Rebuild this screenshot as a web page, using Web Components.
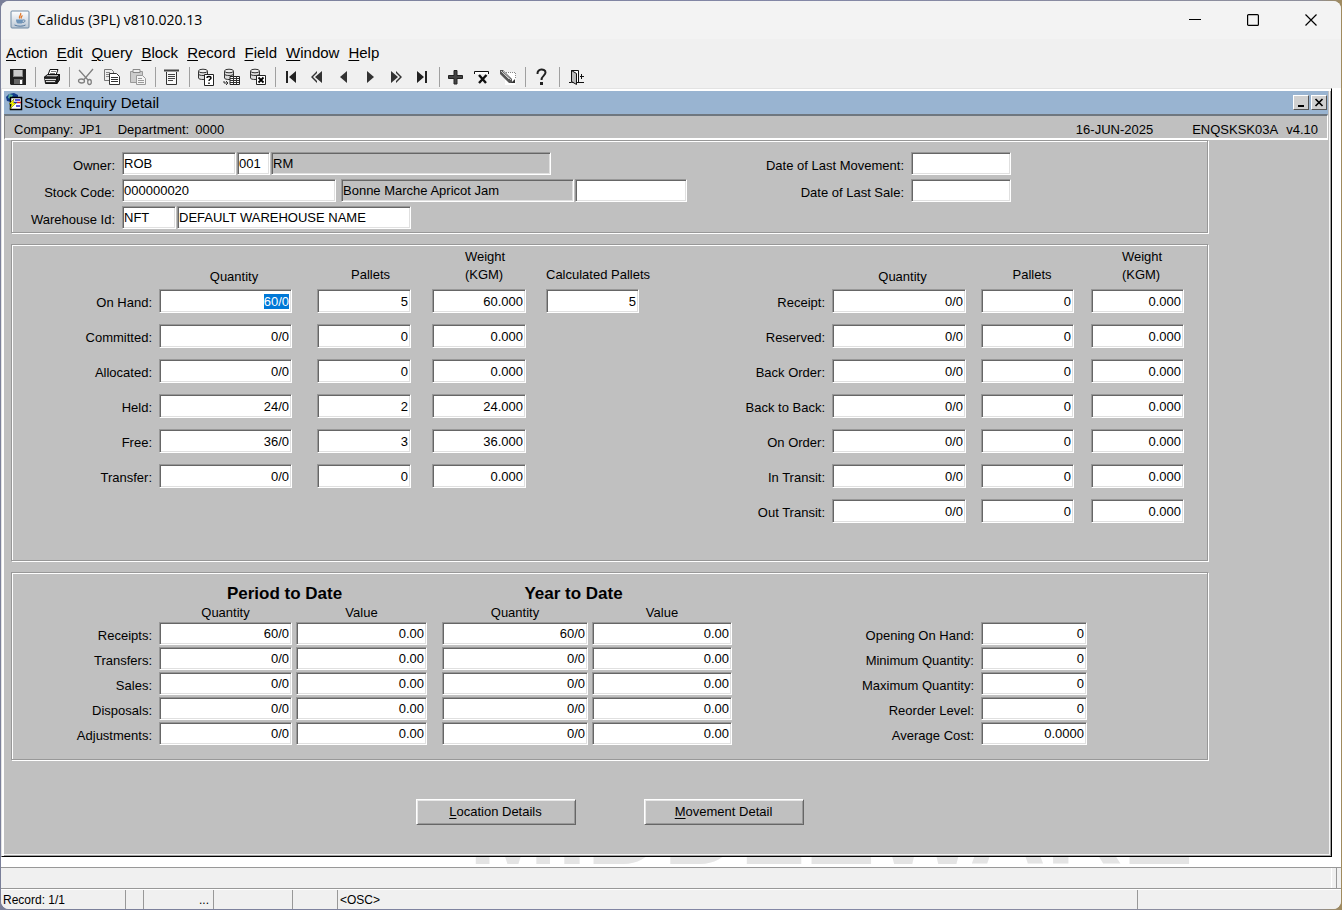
<!DOCTYPE html>
<html lang="en">
<head>
<meta charset="utf-8">
<title>Calidus (3PL) v810.020.13</title>
<style>
  html { height: 100%; }
  body {
    margin: 0;
    min-height: 100%;
    display: flex;
    font: 13px/18px "Liberation Sans", Arial, sans-serif;
    color: #000;
    background: linear-gradient(to right, #7a7f99 0, #8387a6 60%, #8e8f9c 98%, #a08a5c 100%);
  }
</style>
</head>
<body>
<desktop-frame heading="Calidus (3PL) v810.020.13">
  <menu-bar items="Action,Edit,Query,Block,Record,Field,Window,Help"></menu-bar>
  <tool-bar></tool-bar>
  <mdi-area watermark="MIDDLEWARE">
    <child-window heading="Stock Enquiry Detail">
      <context-bar company="JP1" department="0000" date="16-JUN-2025" module="ENQSKSK03A" release="v4.10"></context-bar>
      <etched-panel><stock-key></stock-key></etched-panel>
      <etched-panel><balance-panel></balance-panel></etched-panel>
      <etched-panel><period-panel></period-panel></etched-panel>
      <action-row>
        <action-button>Location Details</action-button>
        <action-button>Movement Detail</action-button>
      </action-row>
    </child-window>
  </mdi-area>
  <status-bar record="Record: 1/1" mode="&lt;OSC&gt;"></status-bar>
</desktop-frame>

<script>
const escapeHtml = s => String(s).replace(/[&<>"]/g, c => ({ '&': '&amp;', '<': '&lt;', '>': '&gt;', '"': '&quot;' }[c]));

class Part extends HTMLElement {
  connectedCallback() {
    if (this.shadowRoot) return;
    const t = document.createElement('template');
    t.innerHTML = `<style>:host,*{box-sizing:border-box}${this.css()}</style>${this.html()}`;
    this.attachShadow({ mode: 'open' }).append(t.content.cloneNode(true));
    this.ready();
  }
  attr(n) { return escapeHtml(this.getAttribute(n) || ''); }
  css() { return ''; }
  html() { return '<slot></slot>'; }
  ready() {}
}

const FIELD_CSS = `
  input {
    display: block; height: 24px; margin: 0; padding: 0 2px 0 1px;
    font: inherit; color: #000; background: #fff; border-radius: 0; outline: 0;
    border: 1px solid; border-color: #989898 #fff #fff #989898;
    box-shadow: inset 1px 1px #666, inset -1px -1px #e0e0e0;
  }
  input.num { text-align: right; }
  input[readonly] { background: #c0c0c0; }
  input::selection { background: #0078d7; color: #fff; }
  label { display: block; white-space: nowrap; }
`;

customElements.define('desktop-frame', class extends Part {
  css() { return `
    :host { display: flex; flex-direction: column; flex: 1; min-width: 0; margin: 1px; border-radius: 8px; overflow: hidden; background: #f0f0f0; }
    header { display: flex; align-items: center; height: 38px; padding-left: 9px; background: #f3f3f3; }
    h1 { flex: 1; margin: 0 0 0 7px; font: 14px/20px "Open Sans", "Noto Sans", sans-serif; }
    button { width: 58px; height: 36px; padding: 0; border: 0; background: none; }
    svg { display: block; margin: auto; }
    .badge { margin: 0; }
    nav { display: flex; margin-right: 1px; }
  `; }
  html() { return `
    <header>
      <svg class="badge" width="20" height="20" viewBox="0 0 20 20" aria-hidden="true">
        <defs><linearGradient id="g" x2="0" y2="1"><stop stop-color="#fff"/><stop offset="1" stop-color="#b9c6d4"/></linearGradient></defs>
        <rect x="1" y="1" width="18" height="17" rx="1" fill="url(#g)" stroke="#6f89a3"/>
        <path d="M10.500 3c1.600 1.800-2.400 2.800-.8 5.500M12.500 5.500c-1.500 1-2 1.500-1 3" fill="none" stroke="#e07a2e" stroke-width="1.300"/>
        <path d="M6 9.500h7c0 3-1 4-1.500 4H8c-1.200 0-2-2-2-4z" fill="#6d93b8"/>
        <path d="M13 10c3-.6 2.500 2.500-.5 2.500M4.500 15c3 1.600 8.500 1.600 11 0" fill="none" stroke="#54799f"/>
      </svg>
      <h1>${this.attr('heading')}</h1>
      <nav aria-label="Window controls">
        <button aria-label="Minimize"><svg width="12" height="12"><path d="M0 5.500h12" stroke="#000"/></svg></button>
        <button aria-label="Maximize"><svg width="12" height="12"><rect x=".6" y=".6" width="10.800" height="10.800" rx="1" fill="none" stroke="#000" stroke-width="1.200"/></svg></button>
        <button aria-label="Close"><svg width="12" height="12"><path d="M.5.5l11 11M11.500.5l-11 11" stroke="#000" stroke-width="1.200"/></svg></button>
      </nav>
    </header>
    <slot></slot>`; }
});

customElements.define('menu-bar', class extends Part {
  css() { return `
    :host { display: flex; gap: 9px; height: 27px; align-items: center; padding-left: 5px; background: #f0f0f0; }
    button { padding: 0; border: 0; background: none; font: 15px/20px "Liberation Sans", Arial, sans-serif; color: #000; }
    u { text-underline-offset: 2px; text-decoration-thickness: 1px; }
  `; }
  html() { return this.attr('items').split(',').map(i => `<button><u>${i[0]}</u>${i.slice(1)}</button>`).join(''); }
});

const cylinder = '<path d="M1.500 3v7c0 2 9 2 9 0V3" fill="#ddd" stroke="#333"/><ellipse cx="6" cy="3" rx="4.500" ry="1.800" fill="#eee" stroke="#333"/><path d="M1.500 6c0 2 9 2 9 0" fill="none" stroke="#333"/>';
const TOOLS = [
  ['Save', '<path d="M1 1h16v16H2l-1-1z" fill="#222"/><path d="M4 2h10v7H4z" fill="#888"/><path d="M5 2h8v6H5z" fill="#ccc"/><path d="M5 11h9v5H5z" fill="#666"/><path d="M11 12h2v4h-2z" fill="#fff"/>'],
  null,
  ['Print', '<path d="M5 7l2-5.500h8L13 7z" fill="#fff" stroke="#111"/><path d="M8 3.500h5M7 5.500h5" stroke="#777"/><path d="M1.500 9l3-2.500h12L14 9.500z" fill="#bbb" stroke="#111"/><path d="M1.500 9H14v6.500H2.500zM14 9l2.500-2.500V12L14 15.500z" fill="#333" stroke="#111"/><path d="M2 11.500h11M3 13.500h9" stroke="#ddd"/>'],
  null,
  ['Cut', '<g fill="none" stroke="#808080" stroke-width="1.300"><path d="M2 2l9 10M16 1L7 11.500"/><ellipse cx="4.500" cy="13" rx="3" ry="2"/><ellipse cx="12.500" cy="14" rx="1.800" ry="2.500"/></g>'],
  ['Copy', '<path d="M1.500 1.500h7l2 2v9h-9z" fill="#eee" stroke="#777"/><path d="M3 4.500h4M3 6.500h4M3 8.500h4" stroke="#888"/><path d="M6.500 5.500h7l3 3v8h-10z" fill="#fff" stroke="#333"/><path d="M8 9.500h7M8 11.500h7M8 13.500h7" stroke="#333"/>'],
  ['Paste', '<path d="M1.500 3.500h12v11h-12z" fill="#ccc" stroke="#999"/><path d="M4 1.500h7v3H4z" fill="#eee" stroke="#888"/><path d="M7.500 7.500h6l3 3v6h-9z" fill="#f4f4f4" stroke="#999"/><path d="M9 10.500h4M9 12.500h6M9 14.500h6" stroke="#999"/>'],
  null,
  ['List', '<path d="M1 2.500h15" stroke="#444" stroke-width="2"/><path d="M3.500 4v12.500h10V4" fill="#f8f8f8" stroke="#333"/><path d="M5 6.500h7M5 8.500h7M5 10.500h7M5 12.500h5" stroke="#444"/>'],
  null,
  ['Enter query', cylinder + '<path d="M7.500 6.500h9v11h-9z" fill="#fff" stroke="#222"/><path d="M10 10c0-2 4-2 4 0 0 1.300-2 1.300-2 3M12 14.500V16" fill="none" stroke="#000" stroke-width="1.400"/>'],
  ['Execute query', cylinder + '<path d="M7 8.500h9.500v8H7z" fill="#fff" stroke="#222"/><path d="M7 10.500h9M7 12.500h9M7 14.500h9M10.500 8v8M13.500 8v8M1 13v2h4M3 13l2 2-2 2" fill="none" stroke="#333"/>'],
  ['Cancel query', cylinder + '<path d="M7.500 7.500h9v9h-9z" fill="#fff" stroke="#222"/><path d="M9.500 9.500l5 5M14.500 9.500l-5 5" stroke="#000" stroke-width="1.800"/>'],
  null,
  ['First record', '<path d="M3 3h2v12H3zM13 3v12L6 9z" fill="#222"/>'],
  ['Previous set', '<path d="M8 3v2L4 9l4 4v2L2 9zM13 3v12L6 9z" fill="#333"/>'],
  ['Previous record', '<path d="M12 3v12L5 9z" fill="#333"/>'],
  ['Next record', '<path d="M6 3v12l7-6z" fill="#333"/>'],
  ['Next set', '<path d="M4 3v12l7-6zM9 3v2l4 4-4 4v2l6-6z" fill="#333"/>'],
  ['Last record', '<path d="M12 3h2v12h-2zM4 3v12l7-6z" fill="#222"/>'],
  null,
  ['Insert record', '<path d="M7 2.500h3v5h5.500v3H10v5.500H7v-5.500H1.500v-3H7z" fill="#444" stroke="#222"/>'],
  ['Remove record', '<path d="M1.500 6V3.500h14V6" fill="#fff" stroke="#111"/><path d="M6 7l7 8M13.500 7L6 15" stroke="#111" stroke-width="2.400"/>'],
  ['Clear record', '<path d="M6 4.500h10.500V17H6z" fill="#fff"/><path d="M7 4.500h9M16.500 5v6" stroke="#888" stroke-dasharray="1 1"/><path d="M1 2h3l9 9v4h-3L1 6z" fill="#555"/><path d="M2 3l8 8M4 3l8 9" stroke="#ccc"/><path d="M12 15l4-4v4z" fill="#333"/>'],
  null,
  ['Help', '<path d="M4.500 6C4 0 12.500.5 12.500 4.500 12.500 7.500 8.500 8 8.500 12" fill="none" stroke="#222" stroke-width="2"/><path d="M7 14h3v3H7z" fill="#222"/>'],
  null,
  ['Exit', '<path d="M4.500 2.500h7v12h-7z" fill="#fff" stroke="#111"/><path d="M4.500 2.500l5 3v11l-5-3z" fill="#bbb" stroke="#111"/><path d="M2 14.500h2M11 14.500h6M13 8.500h4M14.500 6v5" stroke="#111"/>']
];

customElements.define('tool-bar', class extends Part {
  css() { return `
    :host { display: flex; align-items: center; height: 22px; padding-left: 4px; background: #f0f0f0; }
    button { width: 26px; height: 20px; padding: 0; border: 0; background: none; }
    svg { display: block; margin: auto; }
    i { width: 8px; height: 20px; background: linear-gradient(#a0a0a0, #a0a0a0) 4px 0 / 1px 100% no-repeat; }
  `; }
  html() { return TOOLS.map(t => t
    ? `<button aria-label="${t[0]}"><svg width="18" height="18" viewBox="0 0 18 18">${t[1]}</svg></button>`
    : '<i></i>').join(''); }
});

customElements.define('mdi-area', class extends Part {
  css() { return `
    :host { display: flex; flex-direction: column; flex: 1; background: #fff; }
    .pane { flex: 1; display: flex; padding-right: 9px; }
    ::slotted(*) { flex: 1; }
    .mark { display: flex; justify-content: center; align-items: flex-end; height: 10px; padding-left: 320px; overflow: hidden;
      font: bold 106px/80px "Liberation Sans", Arial, sans-serif; color: #e4e4e4; }
    .mark::before { content: attr(data-text); }
  `; }
  html() { return `<div class="pane"><slot></slot></div><div class="mark" data-text="${this.attr('watermark')}"></div>`; }
});

customElements.define('child-window', class extends Part {
  css() { return `
    :host { display: flex; flex-direction: column; min-width: 0; padding: 2px 3px 3px 2px; background: #c0c0c0;
      border: 1px solid; border-color: #e3e3e3 #000 #000 #e3e3e3;
      box-shadow: inset 2px 2px #fff, inset -1px -1px #a0a0a0, inset -2px -2px #f4f4f4; }
    header { display: flex; align-items: center; height: 23px; padding: 0 1px 0 2px; background: #99b4d1; }
    h2 { flex: 1; margin: 0; font: 15px/20px "Liberation Sans", Arial, sans-serif; }
    button { width: 16px; height: 15px; margin-left: 2px; padding: 0; background: #d0d0d0; border: 1px solid; border-color: #fff #555 #555 #fff; }
    svg { display: block; margin: auto; }
    header > svg { margin: 0; }
  `; }
  html() { return `
    <header>
      <svg width="18" height="19" viewBox="0 0 18 19" aria-hidden="true">
        <path d="M0 4l3-3 5-1 4 2v3L5 9 1 8z" fill="#123a8a"/><path d="M3 1l4 1-2 4-3-1z" fill="#59b0a0"/>
        <path d="M4.500 4.500h11v12h-11z" fill="#fff" stroke="#000" stroke-width="1.500"/><path d="M9 7h5M8 9.500h3" stroke="#22c" stroke-width="1.500"/><path d="M11 9.500h4" stroke="#d22" stroke-width="1.500"/><path d="M10 13h4" stroke="#22c" stroke-width="1.500"/>
        <path d="M8 6L3 11h3l-2 5 6-6H7z" fill="#ff0" stroke="#550" stroke-width=".5"/>
      </svg>
      <h2>${this.attr('heading')}</h2>
      <button aria-label="Minimize form"><svg width="12" height="11"><path d="M3 9h6" stroke="#000" stroke-width="2"/></svg></button>
      <button aria-label="Close form"><svg width="12" height="11"><path d="M2.500 2l7 7M9.500 2l-7 7" stroke="#000" stroke-width="1.700"/></svg></button>
    </header>
    <slot></slot>`; }
});

customElements.define('context-bar', class extends Part {
  css() { return `
    :host { display: flex; height: 26px; padding: 5px 9px 0; border: 1px solid; border-width: 2px 1px 2px 1px; border-color: #6f777f #fff #fff #888; white-space: pre; }
    .gap { flex: 1; }
    dl { display: flex; margin: 0 16px 0 0; gap: 6px; }
    dd { margin: 0; }
    .date { margin-right: 39px; }
    .module { margin-right: 8px; }
  `; }
  html() { return `
    <dl><dt>Company:</dt><dd>${this.attr('company')}</dd></dl>
    <dl><dt>Department:</dt><dd>${this.attr('department')}</dd></dl>
    <span class="gap"></span>
    <span class="date">${this.attr('date')}</span><span class="module">${this.attr('module')}</span><span>${this.attr('release')}</span>`; }
});

customElements.define('etched-panel', class extends Part {
  css() { return `
    :host { display: block; margin: 0 120px 11px 7px; border: 1px solid #989898; box-shadow: 1px 1px #fff, inset 1px 1px #fff; }
  `; }
});

customElements.define('stock-key', class extends Part {
  css() { return FIELD_CSS + `
    :host { display: flex; justify-content: space-between; padding: 11px 196px 3px 0; }
    .rows { display: grid; gap: 4px; align-content: start; }
    .row { display: flex; gap: 1px; }
    input { height: 23px; }
    label { text-align: right; padding-top: 5px; margin-right: 6px; }
    .main label { width: 103px; }
    .dates label { width: 140px; }
    .space { margin-left: 4px; }
  `; }
  html() {
    const f = (id, w, v, extra = '') => `<input id="${id}" type="text" style="width:${w}px" value="${v}" ${extra}>`;
    return `
    <div class="rows main">
      <div class="row"><label for="owner">Owner:</label>${f('owner', 114, 'ROB')}${f('branch', 33, '001', 'aria-label="Owner branch"')}${f('ownerName', 280, 'RM', 'readonly aria-label="Owner name"')}</div>
      <div class="row"><label for="code">Stock Code:</label>${f('code', 214, '000000020')}${f('desc', 233, 'Bonne Marche Apricot Jam', 'readonly class="space" aria-label="Description"')}${f('alt', 112, '', 'aria-label="Alternative code"')}</div>
      <div class="row"><label for="wh">Warehouse Id:</label>${f('wh', 54, 'NFT')}${f('whName', 234, 'DEFAULT WAREHOUSE NAME', 'aria-label="Warehouse name"')}</div>
    </div>
    <div class="rows dates">
      <div class="row"><label for="moved">Date of Last Movement:</label>${f('moved', 100, '')}</div>
      <div class="row"><label for="sold">Date of Last Sale:</label>${f('sold', 100, '')}</div>
    </div>`;
  }
});

const TABLE_CSS = FIELD_CSS + `
  table { border-collapse: collapse; table-layout: fixed; width: 0; }
  th, td { padding: 0; font-weight: normal; vertical-align: top; }
  tbody th { text-align: right; padding: 5px 7px 0 0; }
`;

/* cols: [heading, cell width, field width]; rows: [label, value, value, ...] */
function matrix(prefix, labelWidth, cols, rows, head) {
  return `<table>
    <colgroup><col style="width:${labelWidth}px">${cols.map(c => `<col style="width:${c[1]}px">`).join('')}</colgroup>
    ${head}
    <tbody>${rows.map(([label, ...values], r) => `<tr>
      <th scope="row"><label for="${prefix}${r}c0">${label}:</label></th>
      ${values.map((v, c) => `<td><input class="num" type="text" id="${prefix}${r}c${c}" style="width:${cols[c][2]}px" value="${v}"${c ? ` aria-label="${label} ${cols[c][0]}"` : ''}></td>`).join('')}
    </tr>`).join('')}</tbody></table>`;
}

customElements.define('balance-panel', class extends Part {
  css() { return TABLE_CSS + `
    :host { display: flex; justify-content: space-between; align-items: flex-start; padding: 1px 6px 26px 0; }
    thead th { height: 43px; padding: 0 8px 5px 0; vertical-align: bottom; white-space: nowrap; }
    thead th.qty { padding-bottom: 3px; }
    thead span { display: inline-block; text-align: left; }
    tbody tr { height: 35px; }
  `; }
  html() {
    const head = cols => `<thead><tr><td></td>${cols.map(c => `<th scope="col"${c[0] === 'Quantity' ? ' class="qty"' : ''}><span>${c[0].replace('Weight (', 'Weight<br>(')}</span></th>`).join('')}</tr></thead>`;
    const left = [['Quantity', 158, 133], ['Pallets', 115, 94], ['Weight (KGM)', 114, 94], ['Calculated Pallets', 112, 93]];
    const right = [['Quantity', 149, 134], ['Pallets', 110, 93], ['Weight (KGM)', 110, 93]];
    return matrix('a', 147, left, [
      ['On Hand', '60/0', '5', '60.000', '5'],
      ['Committed', '0/0', '0', '0.000'],
      ['Allocated', '0/0', '0', '0.000'],
      ['Held', '24/0', '2', '24.000'],
      ['Free', '36/0', '3', '36.000'],
      ['Transfer', '0/0', '0', '0.000']
    ], head(left)) + matrix('b', 100, right,
      ['Receipt', 'Reserved', 'Back Order', 'Back to Back', 'On Order', 'In Transit', 'Out Transit'].map(l => [l, '0/0', '0', '0.000']),
      head(right));
  }
  ready() {
    const first = this.shadowRoot.getElementById('a0c0');
    first.focus({ preventScroll: true });
    first.select();
  }
});

customElements.define('period-panel', class extends Part {
  css() { return TABLE_CSS + `
    :host { display: flex; justify-content: space-between; align-items: flex-end; padding: 11px 120px 12px 0; }
    input { height: 23px; }
    thead th { height: 19px; vertical-align: middle; }
    thead .group { height: 19px; padding-right: 32px; font: bold 17px/19px "Liberation Sans", Arial, sans-serif; }
    thead span { display: block; }
    tbody tr { height: 25px; }
  `; }
  html() {
    const cols = [['Quantity', 137, 133], ['Value', 146, 131], ['Quantity', 150, 146], ['Value', 145, 140]];
    const head = `<thead>
      <tr><td></td><th class="group" scope="colgroup" colspan="2">Period to Date</th><th class="group" scope="colgroup" colspan="2">Year to Date</th></tr>
      <tr><td></td>${cols.map(c => `<th scope="col"><span style="width:${c[2]}px">${c[0]}</span></th>`).join('')}</tr></thead>`;
    return matrix('p', 147, cols, [
      ['Receipts', '60/0', '0.00', '60/0', '0.00'],
      ...['Transfers', 'Sales', 'Disposals', 'Adjustments'].map(l => [l, '0/0', '0.00', '0/0', '0.00'])
    ], head) + matrix('s', 130, [['Value', 106, 106]], [
      ['Opening On Hand', '0'], ['Minimum Quantity', '0'], ['Maximum Quantity', '0'], ['Reorder Level', '0'], ['Average Cost', '0.0000']
    ], '');
  }
});

customElements.define('action-row', class extends Part {
  css() { return `:host { display: flex; justify-content: center; gap: 68px; margin: 28px 120px 0 7px; }`; }
});

customElements.define('action-button', class extends Part {
  css() { return `
    :host { display: block; }
    button { width: 160px; height: 26px; padding: 0; font: inherit; color: #000; background: #c0c0c0; border: 1px solid; border-color: #fff #666 #666 #fff; box-shadow: inset 1px 1px #e8e8e8, inset -1px -1px #999; }
    u { text-underline-offset: 2px; text-decoration-thickness: 1px; }
  `; }
  html() { const t = escapeHtml(this.textContent.trim()); return `<button><u>${t[0]}</u>${t.slice(1)}</button>`; }
  ready() { this.replaceChildren(); }
});

customElements.define('status-bar', class extends Part {
  css() { return `
    :host { display: block; background: #f0f0f0; font-size: 12px; }
    .message { display: flex; height: 21px; border-top: 1px solid #989898; padding-right: 4px; }
    .message span { flex: 1; border-right: 1px solid #fff; }
    .message i { width: 5px; border-right: 1px solid #989898; }
    .cells { display: flex; height: 21px; border-top: 1px solid #989898; box-shadow: inset 0 1px #fff; line-height: 20px; padding: 1px 0 0 1px; }
    .cells span { border-left: 1px solid #989898; padding: 0 2px; }
    .cells span:first-child { border-left: 0; padding-left: 1px; }
    .record { width: 123px; } .a { width: 18px; } .b { width: 70px; text-align: right; } .cells .b { padding-right: 4px; }
    .c { width: 79px; } .d { width: 45px; } .mode { flex: 1; } .end { width: 204px; }
  `; }
  html() { return `
    <div class="message"><span></span><i></i></div>
    <div class="cells"><span class="record">${this.attr('record')}</span><span class="a"></span><span class="b">...</span><span class="c"></span><span class="d"></span><span class="mode">${this.attr('mode')}</span><span class="end"></span></div>`; }
});
</script>
</body>
</html>
